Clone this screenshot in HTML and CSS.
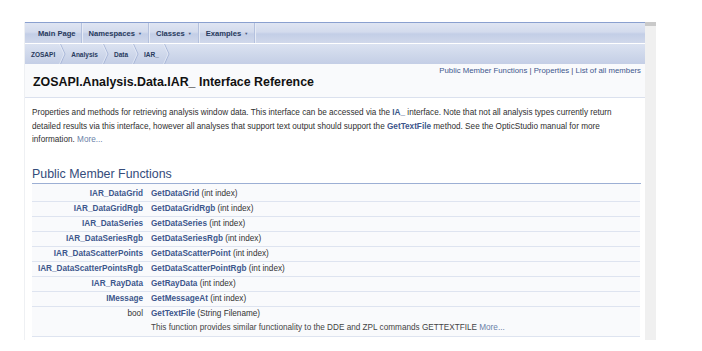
FILE: index.html
```html
<!DOCTYPE html>
<html>
<head>
<meta charset="utf-8">
<link rel="stylesheet" href="styles.css">
</head>
<body>
<div class="frame">
  <div class="page">
    <div class="tabs">
      <div class="tab first">Main Page</div>
      <div class="tab">Namespaces <span class="arr">▼</span></div>
      <div class="tab">Classes <span class="arr">▼</span></div>
      <div class="tab">Examples <span class="arr">▼</span></div>
    </div>
    <div class="crumbs">
      <span class="crumb">ZOSAPI</span>
      <svg class="chev" width="8" height="20" viewBox="0 0 8 20"><path d="M1.5 0 L6 10 L1.5 20" fill="none" stroke="#9eaed3" stroke-width="0.8"/><path d="M0.5 0 L5 10 L0.5 20" fill="none" stroke="#eef1f8" stroke-width="0.6"/></svg>
      <span class="crumb">Analysis</span>
      <svg class="chev" width="8" height="20" viewBox="0 0 8 20"><path d="M1.5 0 L6 10 L1.5 20" fill="none" stroke="#9eaed3" stroke-width="0.8"/><path d="M0.5 0 L5 10 L0.5 20" fill="none" stroke="#eef1f8" stroke-width="0.6"/></svg>
      <span class="crumb">Data</span>
      <svg class="chev" width="8" height="20" viewBox="0 0 8 20"><path d="M1.5 0 L6 10 L1.5 20" fill="none" stroke="#9eaed3" stroke-width="0.8"/><path d="M0.5 0 L5 10 L0.5 20" fill="none" stroke="#eef1f8" stroke-width="0.6"/></svg>
      <span class="crumb">IAR_</span>
      <svg class="chev" width="8" height="20" viewBox="0 0 8 20"><path d="M1.5 0 L6 10 L1.5 20" fill="none" stroke="#9eaed3" stroke-width="0.8"/><path d="M0.5 0 L5 10 L0.5 20" fill="none" stroke="#eef1f8" stroke-width="0.6"/></svg>
    </div>
    <div class="header">
      <div class="summary"><a>Public Member Functions</a> | <a>Properties</a> | <a>List of all members</a></div>
      <div class="title">ZOSAPI.Analysis.Data.IAR_ Interface Reference</div>
    </div>
    <div class="contents">
      <p class="desc">Properties and methods for retrieving analysis window data. This interface can be accessed via the <a class="link">IA_</a> interface. Note that not all analysis types currently return detailed results via this interface, however all analyses that support text output should support the <a class="link">GetTextFile</a> method. See the OpticStudio manual for more information. <a class="more">More...</a></p>
      <h2 class="groupheader">Public Member Functions</h2>
      <table class="members">
        <tr class="firstrow"><td class="l"><a>IAR_DataGrid</a></td><td class="r"><a>GetDataGrid</a> (int index)</td></tr>
        <tr><td class="l"><a>IAR_DataGridRgb</a></td><td class="r"><a>GetDataGridRgb</a> (int index)</td></tr>
        <tr><td class="l"><a>IAR_DataSeries</a></td><td class="r"><a>GetDataSeries</a> (int index)</td></tr>
        <tr><td class="l"><a>IAR_DataSeriesRgb</a></td><td class="r"><a>GetDataSeriesRgb</a> (int index)</td></tr>
        <tr><td class="l"><a>IAR_DataScatterPoints</a></td><td class="r"><a>GetDataScatterPoint</a> (int index)</td></tr>
        <tr><td class="l"><a>IAR_DataScatterPointsRgb</a></td><td class="r"><a>GetDataScatterPointRgb</a> (int index)</td></tr>
        <tr><td class="l"><a>IAR_RayData</a></td><td class="r"><a>GetRayData</a> (int index)</td></tr>
        <tr><td class="l"><a>IMessage</a></td><td class="r"><a>GetMessageAt</a> (int index)</td></tr>
        <tr class="tall"><td class="l plain">bool</td><td class="r"><a>GetTextFile</a> (String Filename)<div class="mdesc">This function provides similar functionality to the DDE and ZPL commands GETTEXTFILE <span class="more">More...</span></div></td></tr>
      </table>
    </div>
  </div>
  <div class="scrollbar"><div class="thumb"></div></div>
</div>
</body>
</html>
```

FILE: styles.css
```css
html, body {
  margin: 0;
  padding: 0;
  background: #ffffff;
}
body {
  font-family: "Liberation Sans", Arial, sans-serif;
  color: #2f2f2f;
}
.frame {
  display: flex;
  margin: 22px 0 0 24px;
  width: 632px;
  height: 318px;
}
.page {
  flex: 1;
  overflow: hidden;
  border-left: 1px solid #eef0f3;
  display: flex;
  flex-direction: column;
}
.scrollbar {
  width: 11px;
  background: #f0f0f0;
}
.thumb {
  height: 4px;
  background: #c9c9c9;
}
.tabs {
  display: flex;
  height: 21px;
  border-top: 1px solid #8aa0cf;
  box-sizing: border-box;
  background: linear-gradient(#dfe5f2 0%, #d3dbed 45%, #c3cee6 55%, #d0d8eb 100%);
}
.tab {
  display: flex;
  align-items: center;
  padding: 0 6px 0 7px;
  font-size: 7.6px;
  font-weight: bold;
  color: #283a5d;
  border-right: 1px solid #b4c1de;
  box-shadow: 1px 0 0 #e6ebf5;
}
.tab.first {
  padding-left: 13px;
  padding-right: 5px;
}
.arr {
  font-size: 4px;
  margin-left: 3px;
  color: #4a5a7e;
}
.crumbs {
  display: flex;
  align-items: center;
  height: 20px;
  margin-top: 1px;
  background: linear-gradient(#dbe2f1 0%, #cfd8eb 50%, #c4cee6 100%);
  padding-left: 6px;
}
.crumb {
  font-size: 6.5px;
  font-weight: bold;
  color: #283a5d;
}
.chev {
  display: block;
  margin: 0 4px 0 4px;
}
.header {
  background: #f9fafc;
  border-bottom: 1px solid #dbe1ee;
  padding: 2px 4px 0 8px;
  height: 31px;
}
.summary {
  text-align: right;
  font-size: 7.8px;
  line-height: 10px;
  color: #3a4a6e;
}
.summary a { color: #3d578c; }
.title {
  font-size: 12.4px;
  font-weight: bold;
  color: #111;
  line-height: 16px;
  margin-top: -2px;
}
.contents {
  padding: 0 4px 0 7px;
}
.desc {
  font-size: 8.2px;
  line-height: 13.6px;
  margin: 8px 0 0 0;
  color: #2f2f2f;
}
.desc .link { color: #3d578c; font-weight: bold; }
.desc .more { color: #6b7fa8; }
.groupheader {
  font-size: 12.4px;
  font-weight: normal;
  color: #354c7b;
  margin: 19px 0 0 0;
  padding-bottom: 1px;
  border-bottom: 1px solid #9cafd4;
  line-height: 16px;
}
.members {
  border-collapse: collapse;
  width: 608px;
  font-size: 8.2px;
  background: #f9fafc;
}
.members td {
  border-bottom: 1px solid #dee4f0;
  height: 14px;
  padding: 0;
  vertical-align: middle;
  line-height: 14px;
  color: #333;
}
.members tr.firstrow td { padding-top: 3px; height: 14px; }
.members td.l {
  text-align: right;
  width: 111px;
  white-space: nowrap;
}
.members td.r {
  padding-left: 8px;
}
.members a { color: #3d578c; font-weight: bold; }
.members td.plain { color: #333; }
.members tr.tall td { height: 29px; vertical-align: top; }
.mdesc {
  color: #444;
  line-height: 14px;
}
.mdesc .more { color: #6b7fa8; }
```
